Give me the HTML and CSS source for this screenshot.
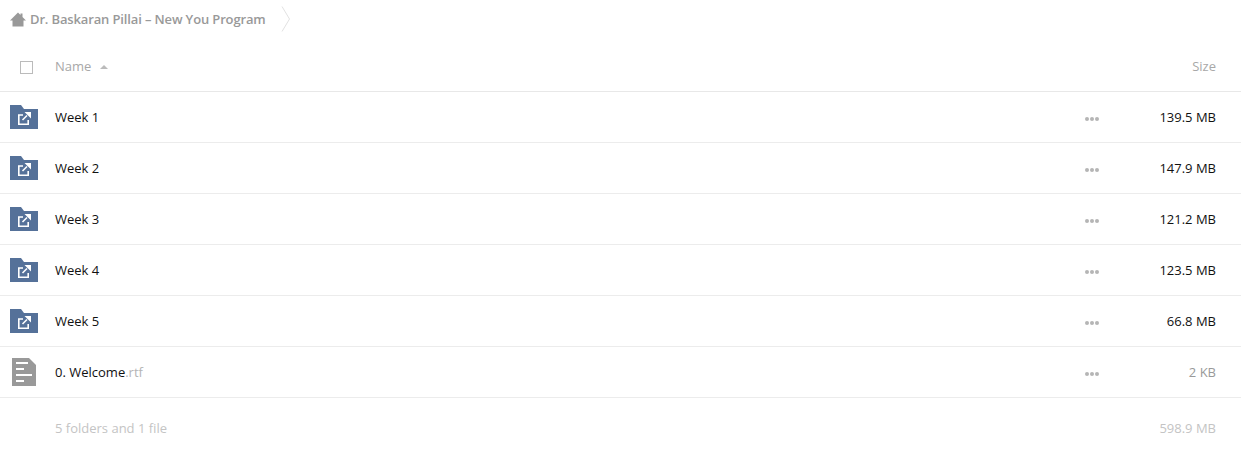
FILE: index.html
```html
<!DOCTYPE html>
<html lang="en">
<head>
    <meta charset="UTF-8">
    <title>Dr. Baskaran Pillai – New You Program</title>
    <link rel="stylesheet" href="styles.css">
</head>
<body>
    <div class="breadcrumb">
        <svg class="home-icon" width="16" height="15" viewBox="0 0 16 15"><path d="M8 0.5 L10.5 3 V1.5 H12.5 V5 L16 8.5 H13.5 V14.5 H2.5 V8.5 H0 Z" fill="#999"/></svg>
        <span class="crumb-name">Dr. Baskaran Pillai – New You Program</span>
        <svg class="crumb-arrow" width="10" height="26" viewBox="0 0 10 26"><path d="M1 0.5 L8.5 13 L1 25.5" fill="none" stroke="#e2e2e2"/></svg>
    </div>

    <div class="list-head">
        <div class="check-col"><span class="checkbox"></span></div>
        <div class="name-col head-name">Name <span class="sort-up"></span></div>
        <div class="size-col head-size">Size</div>
    </div>

    <div class="row">
        <div class="icon-col">
            <svg width="28" height="24" viewBox="0 0 28 24"><path class="folder" d="M0 0 H11 L14 4 H28 V24 H0 Z"/><path class="link" d="M13 10 H8.8 V19.2 H18.2 V15"/><path class="link" d="M12.5 15 L17 10.5"/><path class="arrow" d="M14.5 7 H21 V13.5 Z"/></svg>
        </div>
        <div class="name-col">Week 1</div>
        <div class="dots"><i></i><i></i><i></i></div>
        <div class="size-col">139.5 MB</div>
    </div>
    <div class="row">
        <div class="icon-col">
            <svg width="28" height="24" viewBox="0 0 28 24"><path class="folder" d="M0 0 H11 L14 4 H28 V24 H0 Z"/><path class="link" d="M13 10 H8.8 V19.2 H18.2 V15"/><path class="link" d="M12.5 15 L17 10.5"/><path class="arrow" d="M14.5 7 H21 V13.5 Z"/></svg>
        </div>
        <div class="name-col">Week 2</div>
        <div class="dots"><i></i><i></i><i></i></div>
        <div class="size-col">147.9 MB</div>
    </div>
    <div class="row">
        <div class="icon-col">
            <svg width="28" height="24" viewBox="0 0 28 24"><path class="folder" d="M0 0 H11 L14 4 H28 V24 H0 Z"/><path class="link" d="M13 10 H8.8 V19.2 H18.2 V15"/><path class="link" d="M12.5 15 L17 10.5"/><path class="arrow" d="M14.5 7 H21 V13.5 Z"/></svg>
        </div>
        <div class="name-col">Week 3</div>
        <div class="dots"><i></i><i></i><i></i></div>
        <div class="size-col">121.2 MB</div>
    </div>
    <div class="row">
        <div class="icon-col">
            <svg width="28" height="24" viewBox="0 0 28 24"><path class="folder" d="M0 0 H11 L14 4 H28 V24 H0 Z"/><path class="link" d="M13 10 H8.8 V19.2 H18.2 V15"/><path class="link" d="M12.5 15 L17 10.5"/><path class="arrow" d="M14.5 7 H21 V13.5 Z"/></svg>
        </div>
        <div class="name-col">Week 4</div>
        <div class="dots"><i></i><i></i><i></i></div>
        <div class="size-col">123.5 MB</div>
    </div>
    <div class="row">
        <div class="icon-col">
            <svg width="28" height="24" viewBox="0 0 28 24"><path class="folder" d="M0 0 H11 L14 4 H28 V24 H0 Z"/><path class="link" d="M13 10 H8.8 V19.2 H18.2 V15"/><path class="link" d="M12.5 15 L17 10.5"/><path class="arrow" d="M14.5 7 H21 V13.5 Z"/></svg>
        </div>
        <div class="name-col">Week 5</div>
        <div class="dots"><i></i><i></i><i></i></div>
        <div class="size-col">66.8 MB</div>
    </div>
    <div class="row">
        <div class="icon-col">
            <svg class="file-icon" width="24" height="28" viewBox="0 0 24 28"><path d="M0 0 H17 L24 7 V28 H0 Z" fill="#999"/><path d="M4 5 H16 M4 11 H12 M4 17 H20 M4 23 H12" stroke="#fff" stroke-width="2"/></svg>
        </div>
        <div class="name-col">0. Welcome<span class="ext">.rtf</span></div>
        <div class="dots"><i></i><i></i><i></i></div>
        <div class="size-col muted">2 KB</div>
    </div>

    <div class="summary">
        <div class="name-col">5 folders and 1 file</div>
        <div class="size-col">598.9 MB</div>
    </div>
</body>
</html>
```

FILE: styles.css
```css
* { margin: 0; padding: 0; box-sizing: border-box; }

body {
    font-family: "Open Sans", sans-serif;
    font-size: 13px;
    color: #111;
    background: #fff;
}

.breadcrumb {
    height: 38px;
    display: flex;
    align-items: center;
    padding-left: 10px;
}

.home-icon {
    margin-right: 4px;
}

.crumb-name {
    font-weight: 600;
    letter-spacing: -0.14px;
    color: #999;
}

.crumb-arrow {
    margin-left: 15px;
}

.list-head {
    height: 54px;
    padding-top: 3px;
    display: flex;
    align-items: center;
    border-bottom: 1px solid #e8e8e8;
    color: #a8a8a8;
}

.check-col {
    width: 55px;
    padding-left: 20px;
    padding-top: 3px;
    display: flex;
}

.checkbox {
    width: 13px;
    height: 13px;
    border: 1px solid #bbb;
}

.sort-up {
    display: inline-block;
    width: 0;
    height: 0;
    margin-left: 5px;
    vertical-align: 2px;
    border-left: 4px solid transparent;
    border-right: 4px solid transparent;
    border-bottom: 4px solid #bbb;
}

.name-col {
    flex: 1;
}

.size-col {
    width: 142px;
    padding-right: 25px;
    text-align: right;
}

.row {
    height: 51px;
    display: flex;
    align-items: center;
    border-bottom: 1px solid #ececec;
}

.icon-col {
    width: 55px;
    padding-left: 10px;
    display: flex;
}

.file-icon {
    margin-left: 2px;
}

.folder {
    fill: #557199;
}

.link {
    fill: none;
    stroke: #fff;
    stroke-width: 1.6;
}

.arrow {
    fill: #fff;
}

.dots {
    display: flex;
    gap: 1px;
    padding-top: 3px;
}

.dots i {
    width: 4px;
    height: 4px;
    border-radius: 50%;
    background: #b5b5b5;
}

.ext {
    color: #b5b5b5;
}

.muted {
    color: #999;
}

.summary {
    height: 60px;
    display: flex;
    align-items: center;
    padding-left: 55px;
    color: #c4c4c4;
}
```
